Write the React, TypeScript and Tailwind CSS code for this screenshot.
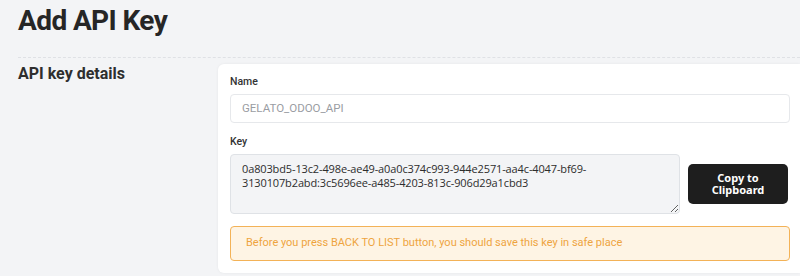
import React from "react";

const KEY_VALUE =
  "0a803bd5-13c2-498e-ae49-a0a0c374c993-944e2571-aa4c-4047-bf69-\n3130107b2abd:3c5696ee-a485-4203-813c-906d29a1cbd3";

export default function App() {
  return (
    <div
      className="w-full h-[276px] overflow-hidden bg-[#f3f4f6] text-[#2b2b2b]"
      style={{ fontFamily: "Roboto, 'Liberation Sans', sans-serif" }}
    >
      <div className="pl-[18px]">
        <h1 className="pt-[4px] text-[28px] leading-[33px] font-bold text-[#262626] tracking-[-0.6px]">
          Add API Key
        </h1>
        <div className="mt-[20px] border-t border-dashed border-[#dfe1e5]" />
        <div className="mt-[6px] flex">
          <div className="w-[200px] shrink-0">
            <h2 className="text-[16px] leading-[20px] font-bold text-[#2e2e2e]">
              API key details
            </h2>
          </div>
          <div className="flex-1 h-[209px] bg-white rounded-l-[6px] shadow-[0_0_3px_rgba(0,0,0,0.06)] pl-[12px] pr-[10px] pt-[11px]">
            <label className="block text-[10.5px] leading-[14px] font-medium text-[#333] mb-[5px]">
              Name
            </label>
            <div className="h-[29px] rounded-[4px] border border-[#e6e8eb] bg-white flex items-center pl-[11px] text-[11.5px] text-[#9a9da3]">
              GELATO_ODOO_API
            </div>
            <label className="block mt-[12px] text-[10.5px] leading-[14px] font-medium text-[#333] mb-[5px]">
              Key
            </label>
            <div className="flex items-center gap-[8px]">
              <textarea
                readOnly
                value={KEY_VALUE}
                className="flex-1 h-[60px] rounded-[4px] border border-[#dfe2e6] bg-[#f3f4f6] pl-[11px] pr-[8px] pt-[7px] text-[11px] leading-[13.5px] tracking-[-0.13px] text-[#2d2d2d] outline-none resize-y"
                style={{ fontFamily: "'Open Sans', 'Noto Sans', sans-serif" }}
              />
              <button
                className="w-[100px] h-[40px] mr-[2px] shrink-0 rounded-[5px] bg-[#1e1e1e] text-white text-[11px] leading-[12px] font-bold"
                style={{ fontFamily: "'Noto Sans', 'Open Sans', sans-serif" }}
              >
                Copy to
                <br />
                Clipboard
              </button>
            </div>
            <div className="mt-[12px] h-[35px] rounded-[4px] border border-[#f3b257] bg-[#fef4e4] flex items-center pl-[15px] text-[11px] text-[#eea43f]">
              Before you press BACK TO LIST button, you should save this key in safe place
            </div>
          </div>
        </div>
      </div>
    </div>
  );
}
